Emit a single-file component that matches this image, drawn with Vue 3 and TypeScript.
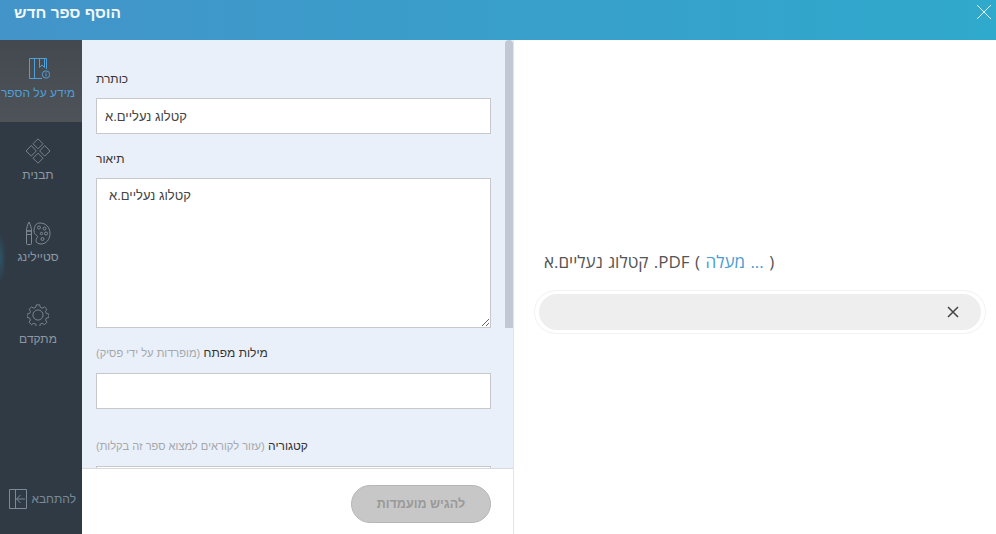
<script setup lang="ts">
const title = 'קטלוג נעליים.א'
</script>

<template>
  <div class="app">
    <header class="top">
      <h1 class="heading">הוסף ספר חדש</h1>
      <svg class="close" width="16" height="16" viewBox="0 0 16 16"><path d="M1 1l14 14M15 1L1 15" stroke="#e8f6fb" stroke-width="1" fill="none"/></svg>
    </header>
    <div class="body">
      <nav class="side">
        <div class="item active">
          <svg width="24" height="26" viewBox="0 0 24 26" fill="none" stroke="currentColor" stroke-width="1">
            <path d="M20.500 13V2.500H3.500v20H16"/><path d="M8.500 2.500v20"/><path d="M13.500 2.500v9l2.500-2.500 2.500 2.500v-9"/>
            <circle cx="20" cy="18.500" r="3.700"/><path d="M20 17.500v3M20 15.900v.8"/>
          </svg>
          <span>מידע על הספר</span>
        </div>
        <div class="item">
          <svg width="26" height="26" viewBox="0 0 26 26" fill="none" stroke="#7f8a94" stroke-width=".9">
            <path d="M13 .800l5 5-5 5-5-5z"/><path d="M6.300 7.500l5 5.500-5 5-5.300-5z"/><path d="M19.700 7.500l5.300 5.500-5.300 5-5-5z"/><path d="M13 15.200l5 5-5 5-5-5z"/>
          </svg>
          <span>תבנית</span>
        </div>
        <div class="item">
          <svg width="26" height="26" viewBox="0 0 26 26" fill="none" stroke="#7f8a94" stroke-width="1">
            <path d="M1.500 11c0-3 1-6 2.500-9 1.500 3 2.500 6 2.500 9zM1.500 11h5v3.500h-5zM1.500 14.500h5v9a1 1 0 0 1-1 1h-3a1 1 0 0 1-1-1z"/>
            <path d="M15 3c6 0 10 4.500 10 10.500S21 24 16 24c-3 0-5-1.500-5-3.500s1.500-2.500 1.500-4-3.500-1.500-3.500-5.500C9 6 11 3 15 3z"/>
            <circle cx="14" cy="7.500" r="1.500"/><circle cx="19.500" cy="8.500" r="1.500"/><circle cx="21" cy="13.500" r="1.500"/><circle cx="17.500" cy="19" r="1.500"/><circle cx="16.500" cy="13.500" r="1.200"/>
          </svg>
          <span>סטיילינג</span>
        </div>
        <div class="item">
          <svg class="gear" viewBox="0 0 26 26" fill="none" stroke="#7f8a94" stroke-width="1.100">
            <path d="M11 1h4l.7 3 2.300 1 2.700-1.600 2.800 2.800-1.600 2.700 1 2.300 3 .7v4l-3 .7-1 2.300 1.600 2.700-2.800 2.800-2.700-1.600-2.300 1-.7 3h-4l-.7-3-2.300-1-2.700 1.600-2.800-2.800 1.600-2.700-1-2.300-3-.7v-4l3-.7 1-2.300-1.600-2.700 2.800-2.800 2.700 1.600 2.300-1z"/>
            <circle cx="13" cy="13" r="6"/>
          </svg>
          <span>מתקדם</span>
        </div>
        <div class="hide">
          <span>להתחבא</span>
          <svg width="18" height="20" viewBox="0 0 18 20" fill="none" stroke="currentColor" stroke-width="1">
            <path d="M.500.500h17v19H.500zM6.500.500v19"/><path d="M16 10H7.500M11.500 6l-4 4 4 4"/>
          </svg>
        </div>
      </nav>
      <section class="panel">
        <div class="form">
          <div class="thumb"></div>
          <div class="field first">
            <label class="lab">כותרת</label>
            <input class="inp" :value="title" />
          </div>
          <div class="field">
            <label class="lab">תיאור</label>
            <textarea class="inp area" :value="title"></textarea>
          </div>
          <div class="field">
            <label class="lab gap">מילות מפתח <em>(מופרדות על ידי פסיק)</em></label>
            <input class="inp" />
          </div>
          <div class="field wide">
            <label class="lab gap">קטגוריה <em>(עזור לקוראים למצוא ספר זה בקלות)</em></label>
            <input class="inp" />
          </div>
        </div>
        <div class="foot">
          <button class="submit">להגיש מועמדות</button>
        </div>
      </section>
      <section class="preview">
        <p class="line"><bdi>{{ title }}</bdi> .PDF ( <span class="link"><bdi>מעלה</bdi> ...</span> )</p>
        <div class="pill">
          <div class="pill-in">
            <svg width="14" height="14" viewBox="0 0 14 14"><path d="M2 2l10 10M12 2L2 12" stroke="#444" stroke-width="1.500" fill="none"/></svg>
          </div>
        </div>
      </section>
    </div>
  </div>
</template>

<style>
html, body { margin: 0; overflow: hidden; background: #fff; }
</style>

<style scoped>
.app { width: 996px; height: 534px; display: flex; flex-direction: column; overflow: hidden; font-family: "Liberation Sans", Arial, sans-serif; }
.top { height: 40px; flex: none; display: flex; justify-content: space-between; align-items: flex-start; background: linear-gradient(90deg, #4394c9, #2fa9cc); padding: 3px 4px 0 14px; box-sizing: border-box; }
.heading { margin: 0; font-size: 15.500px; line-height: 20px; font-weight: 700; color: #f1f7fb; }
.close { margin-top: 1px; }
.body { flex: 1; display: flex; min-height: 0; }
.side { width: 82px; flex: none; background: radial-gradient(ellipse 6px 26px at 0 218px, #2d5466, transparent), #2f3a45; display: flex; flex-direction: column; color: #8f98a1; }
.item { height: 82px; display: flex; flex-direction: column; align-items: center; padding: 16px 6px 0 0; box-sizing: border-box; font-size: 12px; }
.item svg { height: 26px; }
.item svg.gear { width: 22px; height: 22px; margin: 2px 0; }
.item span { margin-top: 3px; line-height: 16px; white-space: nowrap; }
.active { background: linear-gradient(180deg, #43494f, #4d5359); color: #4f9fd8; }
.hide { margin-top: auto; padding: 0 6px 25px 9px; display: flex; flex-direction: row-reverse; justify-content: space-between; align-items: center; font-size: 12px; color: #7a8a98; }
.panel { width: 431px; flex: none; display: flex; flex-direction: column; border-right: 1px solid #e4e4e4; box-sizing: content-box; }
.form { position: relative; height: 429px; flex: none; overflow: hidden; background: #eaf0f9; padding: 30px 22px 0 14px; box-sizing: border-box; border-bottom: 1px solid #d6d9de; }
.thumb { position: absolute; right: 0; top: 0; width: 8px; height: 288px; border-radius: 4px 4px 0 0; background: #c2c8d4; }
.field { margin-bottom: 16px; }
.lab { display: block; font-size: 12px; line-height: 18px; color: #333; margin-bottom: 10px; white-space: nowrap; direction: rtl; text-align: left; }
.lab.gap { margin-bottom: 11px; }
.lab em { font-style: normal; color: #a4a7ab; font-size: 11.100px; }
.wide { margin-top: 28px; }
.inp { display: block; width: 100%; height: 36px; box-sizing: border-box; border: 1px solid #c6c8cc; background: #fff; padding: 0 8px; font: 13px "Liberation Sans", sans-serif; color: #444; direction: ltr; text-align: left; border-radius: 0; outline: none; }
.area { height: 150px; padding: 9px 12px; resize: vertical; }
.foot { flex: 1; background: #fff; display: flex; justify-content: flex-end; padding: 16px 22px 0 0; box-sizing: border-box; }
.submit { width: 140px; height: 38px; border-radius: 19px; background: #c7c7c7; border: 1px solid #b6b6b6; color: #999; font: 700 12.500px "Liberation Sans", sans-serif; direction: rtl; padding: 0; }
.preview { flex: 1; padding: 212px 10px 0 20px; box-sizing: border-box; min-width: 0; }
.line { margin: 0 0 18px 10px; font: 17px/20px "Open Sans", "Liberation Sans", sans-serif; word-spacing: 1px; color: #555; white-space: nowrap; }
.link { color: #4a9bd4; }
.pill { height: 44px; border: 1px solid #f2f2f2; border-radius: 22px; padding: 3px 4px; box-sizing: border-box; }
.pill-in { height: 36px; border-radius: 18px; background: #eee; display: flex; justify-content: flex-end; align-items: center; padding-right: 21px; }
</style>
